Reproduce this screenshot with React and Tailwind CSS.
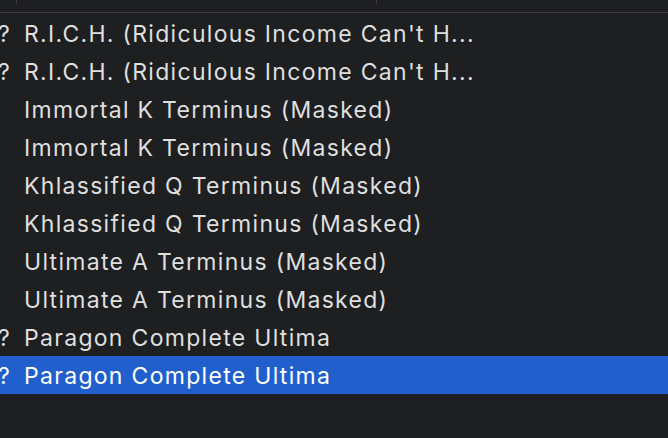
const rows = [
  { mark: true, name: "R.I.C.H. (Ridiculous Income Can't H..." },
  { mark: true, name: "R.I.C.H. (Ridiculous Income Can't H..." },
  { mark: false, name: 'Immortal K Terminus (Masked)' },
  { mark: false, name: 'Immortal K Terminus (Masked)' },
  { mark: false, name: 'Khlassified Q Terminus (Masked)' },
  { mark: false, name: 'Khlassified Q Terminus (Masked)' },
  { mark: false, name: 'Ultimate A Terminus (Masked)' },
  { mark: false, name: 'Ultimate A Terminus (Masked)' },
  { mark: true, name: 'Paragon Complete Ultima' },
  { mark: true, name: 'Paragon Complete Ultima', selected: true },
];

export default function App() {
  return (
    <div
      className="w-[668px] h-[438px] overflow-hidden bg-[#1e1f21] text-[#dfdfdf]"
      style={{ fontFamily: 'Inter, "Noto Sans", sans-serif' }}
    >
      {/* column header */}
      <div className="flex h-[12px] border-b border-[#3a3a3c] box-content">
        <div className="w-[17px] border-r border-[#3a3a3c] h-[4px]"></div>
        <div className="w-[360px] border-r border-[#3a3a3c] h-[4px]"></div>
      </div>

      <div className="pt-[1px]">
        {rows.map((row, i) => (
          <div
            key={i}
            className={
              'flex items-center h-[38px] pt-[2px] text-[23px] tracking-[1.3px] ' +
              (row.selected ? 'bg-[#2160cc] text-white' : '')
            }
          >
            <span className="w-[26px] -ml-[2px] shrink-0 tracking-normal">{row.mark ? '?' : ''}</span>
            <span className="whitespace-nowrap">{row.name}</span>
          </div>
        ))}
      </div>
    </div>
  );
}
